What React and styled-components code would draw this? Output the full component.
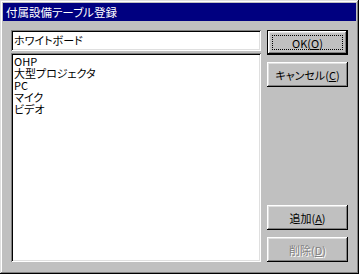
import React from "react";
import styled, { createGlobalStyle } from "styled-components";

const Global = createGlobalStyle`
  html, body { margin: 0; padding: 0; background: #c0c0c0; }
  body {
    font-family: "Noto Sans CJK JP", "Liberation Sans", sans-serif;
    font-size: 11px;
    font-feature-settings: "palt";
  }
  * { box-sizing: border-box; }
`;

const Window = styled.div`
  width: 359px;
  height: 274px;
  background: #c0c0c0;
  padding: 3px;
  box-shadow: inset -1px -1px #000, inset 1px 1px #dfdfdf, inset -2px -2px #808080, inset 2px 2px #fff;
  display: flex;
  flex-direction: column;
`;

const TitleBar = styled.div`
  height: 18px;
  background: #000080;
  color: #fff;
  display: flex;
  align-items: center;
  padding-left: 3px;
  font-size: 11.5px;
  line-height: 18px;
`;

const Body = styled.div`
  flex: 1;
  display: flex;
  padding: 9px 0 0 8px;
`;

const LeftCol = styled.div`
  width: 250px;
  display: flex;
  flex-direction: column;
  gap: 2px;
`;

const Sunken = styled.div`
  background: #fff;
  box-shadow: inset 1px 1px #808080, inset -1px -1px #fff, inset 2px 2px #000, inset -2px -2px #dfdfdf;
  padding: 2px 3px;
  color: #000;
  font-size: 11px;
`;

const TextBox = styled(Sunken)`
  height: 21px;
  line-height: 17px;
`;

const ListBox = styled(Sunken)`
  height: 209px;
  padding-top: 2px;
`;

const ListItem = styled.div`
  height: 12px;
  line-height: 12px;
  white-space: nowrap;
`;

const RightCol = styled.div`
  width: 82px;
  margin-left: 6px;
  display: flex;
  flex-direction: column;
`;

const Group = styled.div`
  display: flex;
  flex-direction: column;
  gap: 7px;
  margin-top: ${(p) => p.$top || 0}px;
`;

const Button = styled.div`
  height: 25px;
  width: 81px;
  display: flex;
  align-items: center;
  justify-content: center;
  font-size: 11px;
  color: ${(p) => (p.$disabled ? "#808080" : "#000")};
  text-shadow: ${(p) => (p.$disabled ? "1px 1px #fff" : "none")};
  box-shadow: ${(p) =>
    p.$default
      ? "inset -1px -1px #000, inset 1px 1px #000, inset -2px -2px #000, inset 2px 2px #fff, inset -3px -3px #808080, inset 3px 3px #dfdfdf"
      : "inset -1px -1px #000, inset 1px 1px #fff, inset -2px -2px #808080, inset 2px 2px #dfdfdf"};
  position: relative;
`;

const Focus = styled.span`
  position: absolute;
  left: 5px;
  right: 5px;
  top: 5px;
  bottom: 5px;
  border: 1px dotted #000;
`;

const U = styled.span`
  text-decoration: underline;
`;

export default function App() {
  const items = ["OHP", "大型プロジェクタ", "PC", "マイク", "ビデオ"];
  return (
    <>
      <Global />
      <Window>
        <TitleBar>付属設備テーブル登録</TitleBar>
        <Body>
          <LeftCol>
            <TextBox>ホワイトボード</TextBox>
            <ListBox>
              {items.map((t) => (
                <ListItem key={t}>{t}</ListItem>
              ))}
            </ListBox>
          </LeftCol>
          <RightCol>
            <Group>
              <Button $default>
                <Focus />
                OK(<U>O</U>)
              </Button>
              <Button>
                キャンセル(<U>C</U>)
              </Button>
            </Group>
            <Group $top={118}>
              <Button>
                追加(<U>A</U>)
              </Button>
              <Button $disabled>
                削除(<U>D</U>)
              </Button>
            </Group>
          </RightCol>
        </Body>
      </Window>
    </>
  );
}
